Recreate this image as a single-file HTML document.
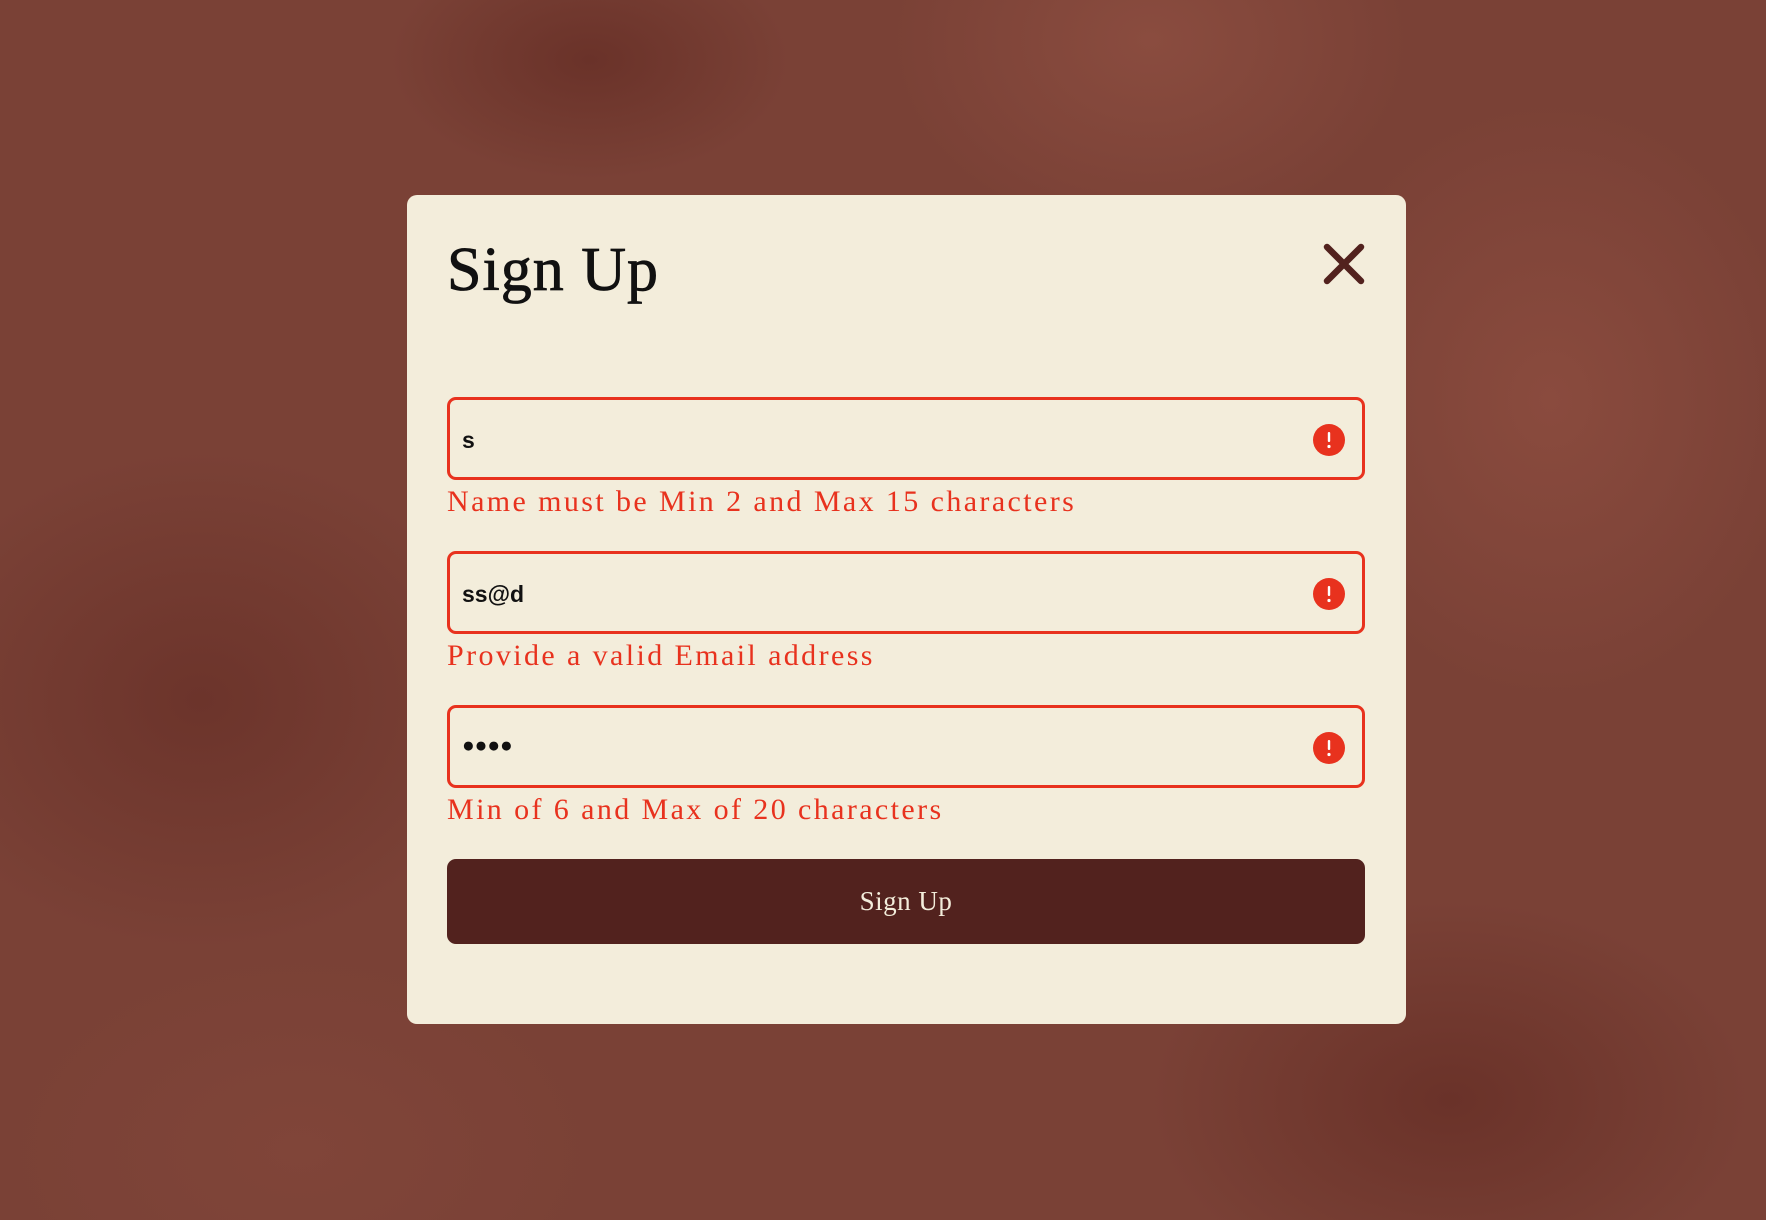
<!DOCTYPE html>
<html><head><style>
html,body{margin:0;padding:0}
body{width:1766px;height:1220px;overflow:hidden;position:relative;
background:
radial-gradient(ellipse 200px 120px at 590px 60px,#6a3229 0%,transparent 100%),
radial-gradient(ellipse 260px 200px at 1150px 40px,#8a4c3f 0%,transparent 100%),
radial-gradient(ellipse 250px 300px at 1550px 400px,#8a4b3e 0%,transparent 100%),
radial-gradient(ellipse 300px 250px at 200px 700px,#6c342b 0%,transparent 100%),
radial-gradient(ellipse 300px 200px at 1450px 1100px,#6a3229 0%,transparent 100%),
radial-gradient(ellipse 300px 200px at 300px 1150px,#804539 0%,transparent 100%),
#7a4136;}
.modal{position:absolute;left:407px;top:195px;width:999px;height:829px;background:#f3eddb;border-radius:10px}
.title{position:absolute;left:447px;top:230px;font:normal 62px "Liberation Serif",serif;-webkit-text-stroke:0.8px #111;color:#111;margin:0;line-height:80px;letter-spacing:1px}
.close{position:absolute;left:1322px;top:242px}
.inp{position:absolute;left:447px;width:912px;height:77px;border:3px solid #e8321e;border-radius:9px;background:#f3eddb}
.inp span{position:absolute;left:12px;top:27px;font:bold 23px "Liberation Sans",sans-serif;color:#111}
.inp svg{position:absolute;right:16px;top:23px}
.err{position:absolute;left:447px;font:30px "Liberation Serif",serif;color:#e8321e;line-height:36px;letter-spacing:2.4px}
.btn{position:absolute;left:447px;top:859px;width:918px;height:85px;background:#52221e;border-radius:9px;color:#f3eddb;font:27px "Liberation Serif",serif;text-align:center;line-height:85px;letter-spacing:0.5px}
</style></head><body>
<div class="modal"></div>
<h1 class="title">Sign Up</h1>
<svg class="close" width="44" height="44" viewBox="0 0 44 44"><path d="M5 5L39 39M39 5L5 39" stroke="#52221e" stroke-width="6.5" stroke-linecap="round"/></svg>
<div class="inp" style="top:397px"><span>s</span><svg width="34" height="34"><circle cx="17" cy="17" r="16" fill="#e8321e"/><rect x="15.8" y="9" width="2.4" height="10" rx="1" fill="#fff"/><circle cx="17" cy="23.5" r="1.6" fill="#fff"/></svg></div>
<div class="err" style="top:484px">Name must be Min 2 and Max 15 characters</div>
<div class="inp" style="top:551px"><span>ss@d</span><svg width="34" height="34"><circle cx="17" cy="17" r="16" fill="#e8321e"/><rect x="15.8" y="9" width="2.4" height="10" rx="1" fill="#fff"/><circle cx="17" cy="23.5" r="1.6" fill="#fff"/></svg></div>
<div class="err" style="top:638px">Provide a valid Email address</div>
<div class="inp" style="top:705px"><span style="font-size:21px;top:26px;letter-spacing:0">●●●●</span><svg width="34" height="34"><circle cx="17" cy="17" r="16" fill="#e8321e"/><rect x="15.8" y="9" width="2.4" height="10" rx="1" fill="#fff"/><circle cx="17" cy="23.5" r="1.6" fill="#fff"/></svg></div>
<div class="err" style="top:792px">Min of 6 and Max of 20 characters</div>
<div class="btn">Sign Up</div>
</body></html>
